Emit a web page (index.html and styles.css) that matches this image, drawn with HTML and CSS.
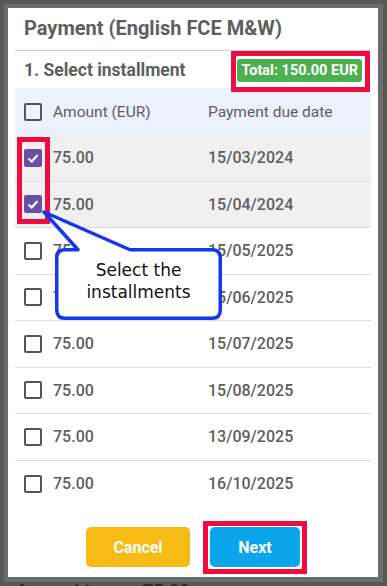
FILE: index.html
```html
<!DOCTYPE html>
<html lang="en">
<head>
    <meta charset="UTF-8">
    <meta name="viewport" content="width=device-width, initial-scale=1.0">
    <title>Payment</title>
    <link rel="stylesheet" href="styles.css">
</head>
<body>

    <div class="overlay">
        <div class="modal">
            <h2 class="modal-title">Payment (English FCE M&amp;W)</h2>

            <div class="section-head">
                <span class="section-title">1. Select installment</span>
                <span class="badge">Total: 150.00 EUR</span>
            </div>

            <div class="table">
                <div class="row head">
                    <span class="check"></span>
                    <span class="amount">Amount (EUR)</span>
                    <span class="date">Payment due date</span>
                </div>
                <div class="row selected">
                    <span class="check checked"><svg viewBox="0 0 18 18"><polyline points="4.5,9.5 7.8,12.5 13.5,6"/></svg></span>
                    <span class="amount">75.00</span>
                    <span class="date">15/03/2024</span>
                </div>
                <div class="row selected">
                    <span class="check checked"><svg viewBox="0 0 18 18"><polyline points="4.5,9.5 7.8,12.5 13.5,6"/></svg></span>
                    <span class="amount">75.00</span>
                    <span class="date">15/04/2024</span>
                </div>
                <div class="row">
                    <span class="check"></span>
                    <span class="amount">75.00</span>
                    <span class="date">15/05/2025</span>
                </div>
                <div class="row">
                    <span class="check"></span>
                    <span class="amount">75.00</span>
                    <span class="date">15/06/2025</span>
                </div>
                <div class="row">
                    <span class="check"></span>
                    <span class="amount">75.00</span>
                    <span class="date">15/07/2025</span>
                </div>
                <div class="row">
                    <span class="check"></span>
                    <span class="amount">75.00</span>
                    <span class="date">15/08/2025</span>
                </div>
                <div class="row">
                    <span class="check"></span>
                    <span class="amount">75.00</span>
                    <span class="date">13/09/2025</span>
                </div>
                <div class="row last">
                    <span class="check"></span>
                    <span class="amount">75.00</span>
                    <span class="date">16/10/2025</span>
                </div>
            </div>

            <div class="actions">
                <button class="btn cancel">Cancel</button>
                <button class="btn next">Next</button>
            </div>
        </div>

        <div class="behind">Amount to pay: 75.00</div>
    </div>

    <!-- annotations drawn over the screenshot -->
    <div class="mark mark-total"></div>
    <div class="mark mark-checks"></div>
    <div class="mark mark-next"></div>

    <div class="callout">
        <svg class="callout-shape" width="185" height="115" viewBox="0 0 185 115">
            <path d="M38 41.75 L4 4 L90 41.75 H172 Q180.25 41.75 180.25 50 V102 Q180.25 110.25 172 110.25 H25 Q16.75 110.25 16.75 102 V50 Q16.75 41.75 25 41.75 Z"/>
        </svg>
        <div class="callout-text">Select the<br>installments</div>
    </div>

</body>
</html>
```

FILE: styles.css
```css
html, body {
    margin: 0;
    padding: 0;
}
body {
    position: relative;
    width: 387px;
    height: 586px;
    overflow: hidden;
    background-color: #6c6c6c;
    box-shadow: inset 0 0 0 4px #585858;
    font-family: Roboto, "Liberation Sans", sans-serif;
}
.overlay {
    padding: 8px 9px 0 8px;
}
.modal {
    position: relative;
    z-index: 1;
    background-color: white;
    padding: 0 7px 10px 7px;
}
.modal-title {
    margin: 0;
    padding: 8px 9px 10px 9px;
    font-size: 20px;
    line-height: 24px;
    font-weight: 700;
    color: #5e5e5e;
    border-bottom: 1px solid #cfcfcf;
}
.section-head {
    height: 37px;
    display: flex;
    align-items: center;
    justify-content: space-between;
    padding: 0 9px;
}
.section-title {
    font-size: 17.5px;
    font-weight: 700;
    color: #5e5e5e;
}
.badge {
    background-color: #4caf50;
    color: white;
    font-size: 14.5px;
    font-weight: 700;
    line-height: 23px;
    padding: 0 4px;
    border-radius: 3px;
    margin-top: 2px;
}
.row {
    box-sizing: border-box;
    height: 46.5px;
    display: flex;
    align-items: center;
    padding-left: 9px;
    border-bottom: 1px solid #dcdce2;
    font-size: 16px;
    font-weight: 500;
    color: #5e5e5e;
}
.row.head {
    height: 47px;
    background-color: #ebf2fd;
    border-bottom: none;
    font-size: 15.5px;
    font-weight: 400;
}
.row.selected {
    background-color: #f0f0f0;
}
.row.last {
    border-bottom: none;
}
.check {
    box-sizing: border-box;
    width: 18px;
    height: 18px;
    border: 2px solid #555;
    border-radius: 2px;
    margin-right: 11px;
    flex-shrink: 0;
}
.check.checked {
    border: none;
    background-color: #6950a6;
}
.check svg {
    display: block;
    width: 18px;
    height: 18px;
    fill: none;
    stroke: white;
    stroke-width: 2;
}
.amount {
    width: 155px;
}
.actions {
    display: flex;
    justify-content: center;
    gap: 20px;
    padding-top: 20px;
}
.btn {
    height: 40px;
    border: none;
    border-radius: 5px;
    color: white;
    font-family: Roboto, "Liberation Sans", sans-serif;
    font-size: 16px;
    font-weight: 700;
    cursor: pointer;
}
.cancel {
    width: 104px;
    background-color: #f6bb14;
}
.next {
    width: 90px;
    background-color: #0ba5ec;
}
.behind {
    padding: 3px 8px 0 8px;
    font-size: 18px;
    font-weight: 700;
    color: #2a2a2a;
}
.mark {
    position: absolute;
    z-index: 2;
    box-sizing: border-box;
    border: 5px solid #ee0c40;
}
.mark-total {
    left: 231px;
    top: 51px;
    width: 139px;
    height: 41px;
}
.mark-checks {
    left: 17px;
    top: 137px;
    width: 33px;
    height: 87px;
}
.mark-next {
    left: 203px;
    top: 521px;
    width: 104px;
    height: 53px;
}
.callout {
    position: absolute;
    z-index: 3;
    left: 40px;
    top: 208px;
    width: 185px;
    height: 115px;
}
.callout-shape {
    display: block;
}
.callout-shape path {
    fill: white;
    stroke: #1237ee;
    stroke-width: 3.5;
    stroke-linejoin: round;
}
.callout-text {
    position: absolute;
    left: 17px;
    top: 51px;
    width: 163px;
    text-align: center;
    font-family: "DejaVu Sans", Verdana, sans-serif;
    font-size: 17px;
    line-height: 22px;
    color: #111;
}
```
